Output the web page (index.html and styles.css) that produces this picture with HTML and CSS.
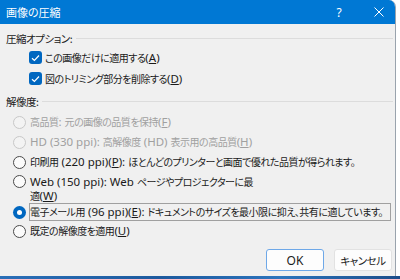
FILE: index.html
```html
<!DOCTYPE html>
<html lang="ja">
<head>
    <meta charset="UTF-8">
    <title>画像の圧縮</title>
    <link rel="stylesheet" href="styles.css">
</head>
<body>
    <div class="screen">
        <div class="window">
            <div class="titlebar">
                <span class="title ja">画像の圧縮</span>
                <span class="help">?</span>
                <svg class="close" width="10" height="10" viewBox="0 0 10 10">
                    <path d="M0.5 0.5 L9.5 9.5 M9.5 0.5 L0.5 9.5" stroke="#fff" stroke-width="1" fill="none"/>
                </svg>
            </div>

            <div class="content">
                <div class="group-head"><span class="ja">圧縮オプション:</span></div>
                <div class="checks">
                    <div class="check-row">
                        <span class="check"><svg width="9" height="8" viewBox="0 0 9 8"><path d="M1 4.2 L3.4 6.5 L8 1.5" stroke="#fff" stroke-width="1.2" fill="none"/></svg></span>
                        <span class="label"><span class="ja">この画像だけに適用する</span>(<u>A</u>)</span>
                    </div>
                    <div class="check-row">
                        <span class="check"><svg width="9" height="8" viewBox="0 0 9 8"><path d="M1 4.2 L3.4 6.5 L8 1.5" stroke="#fff" stroke-width="1.2" fill="none"/></svg></span>
                        <span class="label"><span class="ja">図のトリミング部分を削除する</span>(<u>D</u>)</span>
                    </div>
                </div>

                <div class="group-head second"><span class="ja">解像度:</span></div>
                <div class="radios">
                    <div class="radio-row disabled">
                        <span class="radio"></span>
                        <span class="label"><span class="ja">高品質</span>: <span class="ja">元の画像の品質を保持</span>(<u>F</u>)</span>
                    </div>
                    <div class="radio-row disabled">
                        <span class="radio"></span>
                        <span class="label">HD (330 ppi): <span class="ja">高解像度</span> (HD) <span class="ja">表示用の高品質</span>(<u>H</u>)</span>
                    </div>
                    <div class="radio-row">
                        <span class="radio"></span>
                        <span class="label"><span class="ja">印刷用</span> (220 ppi)(<u>P</u>): <span class="ja">ほとんどのプリンターと画面で優れた品質が得られます。</span></span>
                    </div>
                    <div class="radio-row tall">
                        <span class="radio"></span>
                        <span class="label">Web (150 ppi): Web <span class="ja">ページやプロジェクターに最</span><br><span class="ja">適</span>(<u>W</u>)</span>
                    </div>
                    <div class="radio-row focused">
                        <span class="radio checked"></span>
                        <span class="label"><span class="ja">電子メール用</span> (96 ppi)(<u>E</u>): <span class="ja">ドキュメントのサイズを最小限に抑え、共有に適しています。</span></span>
                    </div>
                    <div class="radio-row">
                        <span class="radio"></span>
                        <span class="label"><span class="ja">既定の解像度を適用</span>(<u>U</u>)</span>
                    </div>
                </div>

                <div class="buttons">
                    <button class="btn default">OK</button>
                    <button class="btn"><span class="ja">キャンセル</span></button>
                </div>
            </div>
        </div>
        <div class="desktop"></div>
    </div>
</body>
</html>
```

FILE: styles.css
```css
body {
    margin: 0;
    background: #fff;
    font-family: "Noto Sans", "Noto Sans CJK JP", sans-serif;
    font-size: 11.5px;
    color: #1a1a1a;
}

.ja {
    font-family: "Noto Sans CJK JP", sans-serif;
    font-size: 10px;
    letter-spacing: -0.5px;
    font-feature-settings: "palt";
}

.screen {
    height: 279px;
    display: flex;
    flex-direction: column;
}

.window {
    width: 396px;
    height: 276px;
    box-sizing: border-box;
    background: #f0f0f0;
    border-right: 1px solid #9aa3ad;
    border-top-right-radius: 7px;
    overflow: hidden;
    display: flex;
    flex-direction: column;
}

.desktop {
    flex: 1;
    background: linear-gradient(90deg, #2a6fb8, #1d5a9e 40%, #2c74bd 70%, #1b4d8a);
}

/* title bar */
.titlebar {
    height: 24px;
    flex-shrink: 0;
    background: #0078d4;
    color: #fff;
    display: flex;
    align-items: center;
    padding-left: 6px;
}

.titlebar .title {
    flex: 1;
    font-size: 11px;
    letter-spacing: 0;
}

.help {
    width: 14px;
    text-align: center;
    font-size: 12px;
    margin-right: 28px;
}

.close {
    margin-right: 11px;
}

/* body */
.content {
    flex: 1;
    display: flex;
    flex-direction: column;
    padding: 6px 0 5px;
}

.group-head {
    height: 16px;
    display: flex;
    align-items: center;
    padding: 0 2px 0 6px;
}

.group-head .ja {
    font-size: 10.5px;
}

.group-head::after {
    content: "";
    flex: 1;
    border-top: 1px solid #dcdcdc;
    margin-left: 4px;
}

.group-head.second {
    margin-top: 4px;
}

.checks {
    margin-top: 1px;
}

.check-row {
    height: 21px;
    display: flex;
    align-items: center;
    padding-left: 29px;
}

.check {
    width: 13px;
    height: 13px;
    border-radius: 3px;
    background: #0067c0;
    display: flex;
    align-items: center;
    justify-content: center;
    margin-right: 3px;
}

.radios {
    margin-top: 3px;
}

.radio-row {
    height: 20px;
    display: flex;
    align-items: center;
    padding-left: 13px;
}

.radio-row .label {
    margin-left: 4px;
    line-height: 14px;
    white-space: nowrap;
}

.radio-row.tall {
    height: 31px;
    align-items: flex-start;
    padding-top: 3px;
    box-sizing: border-box;
}

.radio-row.focused {
    height: 18px;
}

.radio-row.focused .label {
    margin-left: 3px;
    border: 1px solid #a0a0a0;
    padding: 1px 1px 1px 0;
    width: 359px;
}

.radio {
    width: 13px;
    height: 13px;
    box-sizing: border-box;
    border-radius: 50%;
    border: 1px solid #4a4a4a;
    background: #fbfbfb;
    flex-shrink: 0;
    display: flex;
    align-items: center;
    justify-content: center;
}

.radio.checked {
    border: none;
    background: #0067c0;
}

.radio.checked::after {
    content: "";
    width: 5px;
    height: 5px;
    border-radius: 50%;
    background: #fff;
}

.disabled {
    color: #a0a0a0;
}

.disabled .radio {
    border-color: #c8c8c8;
    background: #f3f3f3;
}

/* buttons */
.buttons {
    margin-top: auto;
    display: flex;
    justify-content: flex-end;
    gap: 10px;
    padding-right: 3px;
}

.btn {
    width: 58px;
    height: 22px;
    box-sizing: border-box;
    border: 1px solid #e2e2e2;
    border-radius: 3px;
    background: #fdfdfd;
    font-family: "Noto Sans", "Noto Sans CJK JP", sans-serif;
    font-size: 12px;
    color: #1a1a1a;
    padding: 0;
}

.btn .ja {
    font-size: 10.5px;
}

.btn.default {
    border-color: #6ea8e8;
}
```
